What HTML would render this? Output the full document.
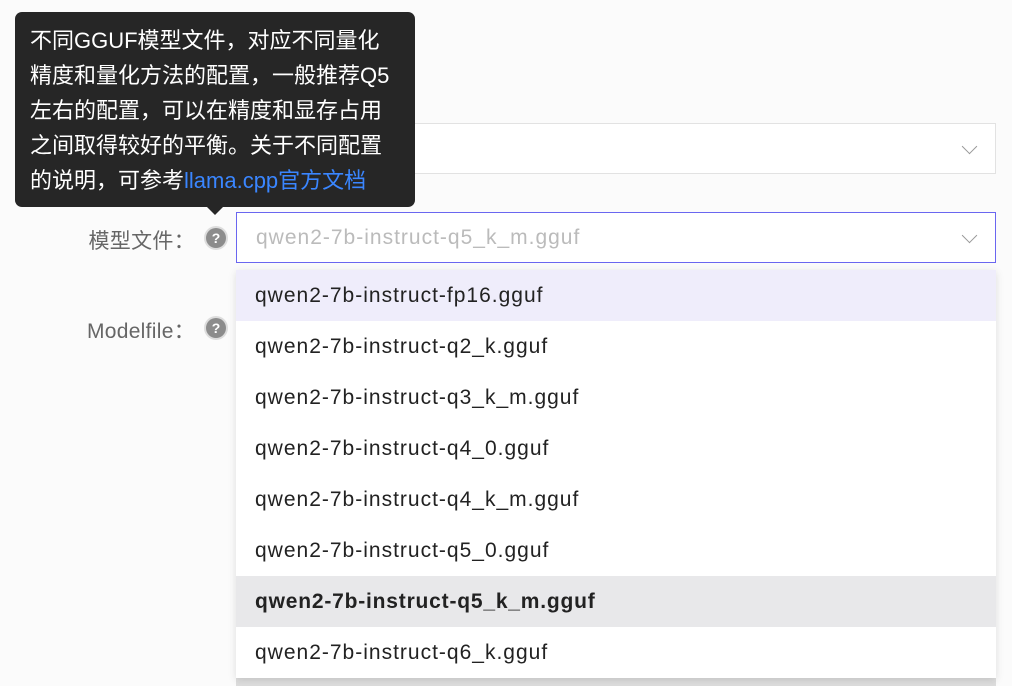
<!DOCTYPE html><html><head><meta charset="utf-8"><style>
body{margin:0;width:1012px;height:684px;background:#fbfbfb;font-family:"Liberation Sans","Noto Sans CJK SC",sans-serif;position:relative;overflow:hidden}
.abs{position:absolute}
.lbl{color:#666;font-size:21px;text-align:right;width:120px;left:75px;letter-spacing:0.3px}
.q{width:20px;height:20px;border-radius:50%;background:#8c8c8c;color:#fff;font-size:14px;font-weight:bold;text-align:center;line-height:20px;box-shadow:0 0 0 2px #ddd}
.sel{left:236px;width:758px;height:49px;background:#fff;border:1px solid #e2e2e2}
.chev{position:absolute;right:20px;top:17px;width:10px;height:10px;border-right:1.5px solid #999;border-bottom:1.5px solid #999;transform:rotate(45deg)}
.dd{left:236px;top:270px;width:760px;height:408px;background:#fff;box-shadow:0 2px 8px rgba(0,0,0,.12);overflow:hidden}
.it{height:51px;line-height:52px;padding-left:19px;font-size:21px;letter-spacing:1px;color:#222}
.tip{left:15px;top:12px;width:370px;height:195px;padding:0 15px;background:#262626;border-radius:7px;color:#fff;font-size:22px;line-height:35px;box-sizing:content-box;white-space:nowrap}
</style></head><body>
<div class="abs" style="left:75px;top:45px;font-size:21px;color:#333">高级配置</div>
<div class="abs sel" style="top:123px"><span class="chev"></span></div>
<div class="abs lbl" style="top:138px">模型源：</div>
<div class="abs lbl" style="top:225px">模型文件：</div>
<div class="abs q" style="left:206px;top:228px">?</div>
<div class="abs sel" style="top:212px;border-color:#6a66f0;height:49px;"><span style="position:absolute;left:19px;top:13px;font-size:21px;letter-spacing:1px;color:#bbb">qwen2-7b-instruct-q5_k_m.gguf</span><span class="chev"></span></div>
<div class="abs lbl" style="top:315px">Modelfile：</div>
<div class="abs q" style="left:206px;top:318px">?</div>
<div class="abs" style="left:236px;top:678px;width:760px;height:8px;background:#ddd"></div>
<div class="abs dd">
<div class="it" style="background:#efedfb">qwen2-7b-instruct-fp16.gguf</div>
<div class="it">qwen2-7b-instruct-q2_k.gguf</div>
<div class="it">qwen2-7b-instruct-q3_k_m.gguf</div>
<div class="it">qwen2-7b-instruct-q4_0.gguf</div>
<div class="it">qwen2-7b-instruct-q4_k_m.gguf</div>
<div class="it">qwen2-7b-instruct-q5_0.gguf</div>
<div class="it" style="background:#e8e8ea;font-weight:bold;letter-spacing:0.8px">qwen2-7b-instruct-q5_k_m.gguf</div>
<div class="it">qwen2-7b-instruct-q6_k.gguf</div>
</div>
<div class="abs tip"><div style="padding-top:11px">不同GGUF模型文件，对应不同量化<br>精度和量化方法的配置，一般推荐Q5<br>左右的配置，可以在精度和显存占用<br>之间取得较好的平衡。关于不同配置<br>的说明，可参考<span style="color:#3a86ff">llama.cpp官方文档</span></div></div>
<div class="abs" style="left:207px;top:207px;width:0;height:0;border-left:8px solid transparent;border-right:8px solid transparent;border-top:8px solid #262626"></div>
</body></html>
